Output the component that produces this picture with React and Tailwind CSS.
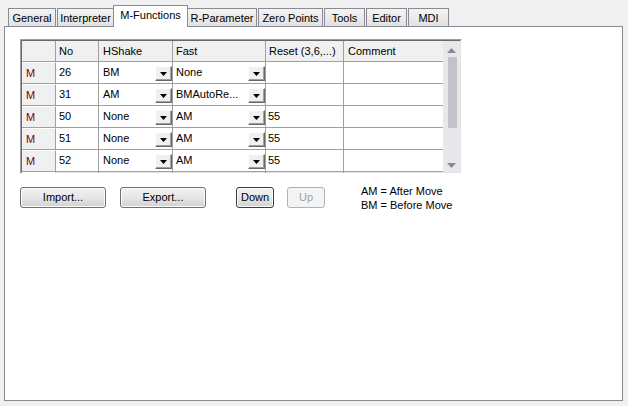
const tabs = [
  { label: 'General', cls: 'ml-[8px] w-[48px]' },
  { label: 'Interpreter', cls: 'ml-[1px] w-[57px]' },
  { label: 'M-Functions', cls: '-ml-[1px] w-[75px]', active: true },
  { label: 'R-Parameter', cls: '-ml-[1px] w-[70px]' },
  { label: 'Zero Points', cls: 'ml-[1px] w-[65px]' },
  { label: 'Tools', cls: 'ml-[1px] w-[41px]' },
  { label: 'Editor', cls: 'ml-[1px] w-[41px]' },
  { label: 'MDI', cls: 'ml-[1px] w-[41px]' },
];

const rows = [
  { id: 1, m: 'M', no: '26', h: 'BM', f: 'None', r: '' },
  { id: 2, m: 'M', no: '31', h: 'AM', f: 'BMAutoRe...', r: '' },
  { id: 3, m: 'M', no: '50', h: 'None', f: 'AM', r: '55' },
  { id: 4, m: 'M', no: '51', h: 'None', f: 'AM', r: '55' },
  { id: 5, m: 'M', no: '52', h: 'None', f: 'AM', r: '55' },
  // next row, only its top pixel shows
  { id: 6, m: '', no: '', h: '', f: '', r: '' },
];

function DropButton() {
  return (
    <div className="absolute right-0 top-[4px] flex h-[15px] w-[17px] items-center justify-center border-t border-l border-t-white border-l-white border-r border-b border-r-[#696969] border-b-[#696969] bg-[#f0f0f0] shadow-[inset_-1px_-1px_0_#a0a0a0]">
      <svg width="7" height="4" viewBox="0 0 7 4">
        <path d="M0 0h7L3.5 4z" fill="#000" />
      </svg>
    </div>
  );
}

function Tabs() {
  return (
    <div className="flex h-[21px] items-end">
      {tabs.map((t) =>
        t.active ? (
          <div
            key={t.label}
            className={`${t.cls} relative z-10 -mb-px flex h-[22px] items-start justify-center border border-b-0 border-[#898c95] bg-white pt-[3px]`}
          >
            {t.label}
          </div>
        ) : (
          <div
            key={t.label}
            className={`${t.cls} flex h-[18px] items-center justify-center border border-b-0 border-[#898c95] bg-linear-to-b from-[#f4f4f4] to-[#e1e1e1] pt-px`}
          >
            {t.label}
          </div>
        )
      )}
    </div>
  );
}

function Grid() {
  return (
    <div className="w-[442px] border-t border-l border-t-[#a0a0a0] border-l-[#a0a0a0] border-r border-b border-r-white border-b-white">
      <div className="flex h-[133px] border-t border-l border-t-[#696969] border-l-[#696969] border-r border-b border-r-[#e3e3e3] border-b-[#e3e3e3]">
        <div className="w-[421px]">
          {/* header */}
          <div className="flex h-[21px] border-b border-[#a0a0a0] bg-[#f0f0f0]">
            <div className="w-[34px] border-r border-[#a0a0a0]" />
            <div className="flex w-[43px] items-center border-r border-[#a0a0a0] pl-[3px]">No</div>
            <div className="flex w-[74px] items-center border-r border-[#a0a0a0] pl-[4px]">HShake</div>
            <div className="flex w-[93px] items-center border-r border-[#a0a0a0] pl-[3px]">Fast</div>
            <div className="flex w-[78px] items-center border-r border-[#a0a0a0] pl-[3px]">Reset (3,6,...)</div>
            <div className="flex w-[99px] items-center pl-[4px]">Comment</div>
          </div>
          {/* body */}
          <div className="h-[111px] overflow-hidden">
            {rows.map((r) => (
              <div key={r.id} className="flex h-[22px] border-b border-[#a0a0a0]">
                <div className="flex w-[34px] items-center border-t border-t-white border-r border-[#a0a0a0] bg-[#f0f0f0] pl-[4px] text-[#7a0000]">
                  {r.m}
                </div>
                <div className="flex w-[43px] items-center border-r border-[#a0a0a0] pl-[3px]">{r.no}</div>
                <div className="relative flex w-[74px] items-center border-r border-[#a0a0a0] pl-[4px]">
                  {r.h}
                  <DropButton />
                </div>
                <div className="relative flex w-[93px] items-center border-r border-[#a0a0a0] pl-[3px]">
                  {r.f}
                  <DropButton />
                </div>
                <div className="flex w-[78px] items-center border-r border-[#a0a0a0] pl-[2px]">{r.r}</div>
                <div className="w-[99px]" />
              </div>
            ))}
          </div>
        </div>
        {/* scrollbar */}
        <div className="flex w-[17px] flex-col items-center bg-[#e8e8ec] pt-[7px]">
          <svg width="9" height="5" viewBox="0 0 9 5">
            <path d="M0 5L4.5 0L9 5z" fill="#868999" />
          </svg>
          <div className="ml-[2px] mt-[4px] h-[71px] w-[9px] bg-[#c2c3c9]" />
          <svg className="mt-[35px]" width="9" height="5" viewBox="0 0 9 5">
            <path d="M0 0h9L4.5 5z" fill="#868999" />
          </svg>
        </div>
      </div>
    </div>
  );
}

function Button({ children, cls, variant }) {
  const base = 'flex h-[21px] items-center justify-center rounded-[3px] border';
  if (variant === 'disabled') {
    return (
      <div className={`${base} ${cls} border-[#adb2b5] bg-[#f4f4f4] text-[#a0a0a0]`}>
        {children}
      </div>
    );
  }
  return (
    <div
      className={`${base} ${cls} ${
        variant === 'default' ? 'border-[#3c3c3c]' : 'border-[#707070]'
      } bg-linear-to-b from-[#f2f2f2] via-[#e6e6e6] to-[#d2d2d2] shadow-[inset_0_0_0_1px_#fcfcfc]`}
    >
      {children}
    </div>
  );
}

export default function App() {
  return (
    <div className="h-[406px] w-[628px] bg-[#f0f0f0] pt-[5px] font-['Liberation_Sans',Arial,sans-serif] text-[11px] leading-[13px] text-black">
      <Tabs />
      <div className="ml-[4px] h-[375px] w-[619px] border border-[#898c95] bg-white pl-[15px] pt-[12px]">
        <Grid />
        <div className="mt-[13px] flex items-start">
          <Button cls="w-[86px]">Import...</Button>
          <Button cls="ml-[14px] w-[86px]">Export...</Button>
          <Button cls="ml-[30px] w-[38px]" variant="default">Down</Button>
          <Button cls="ml-[13px] w-[38px]" variant="disabled">Up</Button>
          <div className="-mt-[3px] ml-[36px] leading-[14px]">
            <div>AM = After Move</div>
            <div>BM = Before Move</div>
          </div>
        </div>
      </div>
    </div>
  );
}
